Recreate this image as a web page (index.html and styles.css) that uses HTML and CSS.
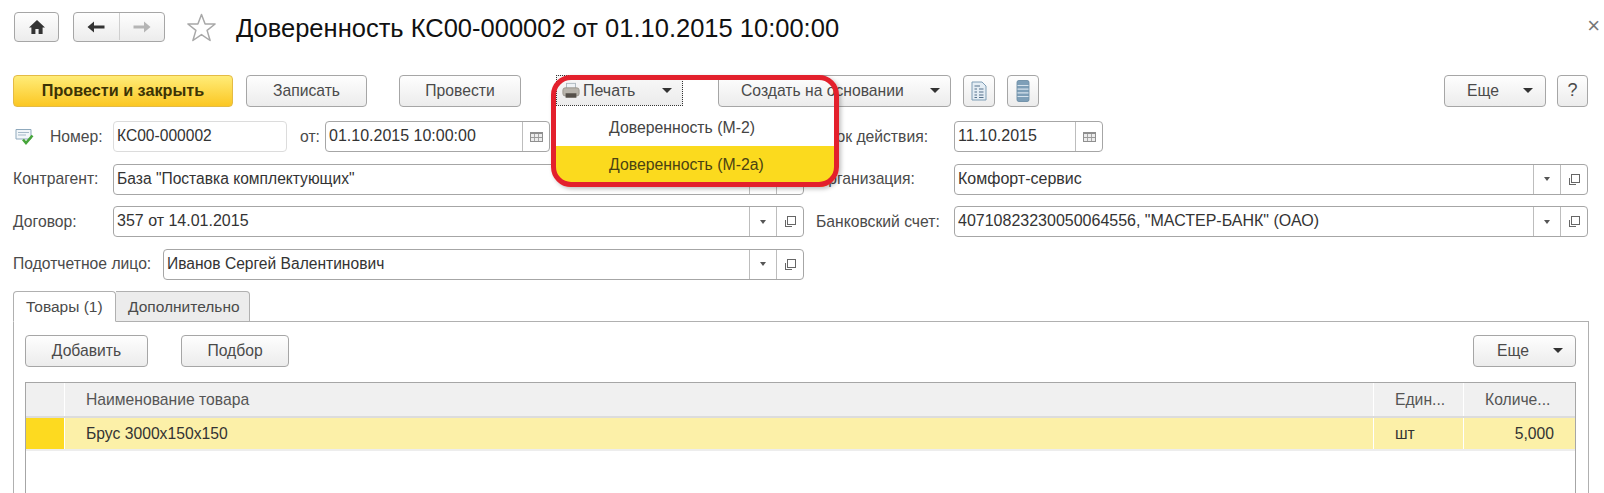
FILE: index.html
```html
<!DOCTYPE html>
<html lang="ru">
<head>
<meta charset="utf-8">
<title>Доверенность КС00-000002</title>
<link rel="stylesheet" href="styles.css">
</head>
<body>
<div class="page">
  <header class="head">
    <button class="btn nav-home"><svg width="18" height="16" viewBox="0 0 18 16"><path d="M9 1 L17 8.5 H14.6 V15 H10.6 V10 H7.4 V15 H3.4 V8.5 H1 Z" fill="#333"/></svg></button>
    <div class="btn nav-pair">
      <span class="nav-cell"><svg width="18" height="12" viewBox="0 0 18 12"><path d="M0.5 6 L7 0.5 V4.4 H17.5 V7.6 H7 V11.5 Z" fill="#333"/></svg></span>
      <span class="nav-cell"><svg width="18" height="12" viewBox="0 0 18 12"><path d="M17.5 6 L11 0.5 V4.4 H0.5 V7.6 H11 V11.5 Z" fill="#b5b5b5"/></svg></span>
    </div>
    <svg class="star" width="31" height="29" viewBox="0 0 30 29"><path d="M15 1.5 L18.6 11 H28.6 L20.6 17.4 L23.6 27.5 L15 21.6 L6.4 27.5 L9.4 17.4 L1.4 11 H11.4 Z" fill="none" stroke="#a8a8a8" stroke-width="1.5" stroke-linejoin="round"/></svg>
    <h1 class="title">Доверенность КС00-000002 от 01.10.2015 10:00:00</h1>
    <span class="close">×</span>
  </header>

  <div class="toolbar">
    <button class="btn btn-primary">Провести и закрыть</button>
    <button class="btn btn-save">Записать</button>
    <button class="btn btn-post">Провести</button>
    <button class="btn btn-print">
      <svg width="18" height="18" viewBox="0 0 20 19"><rect x="5" y="1" width="10" height="7" fill="#eef2f5" stroke="#a9b4bc"/><rect x="1" y="6" width="18" height="9" rx="2.5" fill="#b8b4ac" stroke="#98948c"/><rect x="4" y="12" width="12" height="5" fill="#55504a"/></svg>
      <span class="print-label">Печать</span><i class="caret"></i>
    </button>
    <button class="btn btn-create">Создать на основании<i class="caret"></i></button>
    <button class="btn btn-icon"><svg width="16" height="20" viewBox="0 0 16 20"><path d="M1 1 H11 L15 5 V19 H1 Z" fill="#e4edf4" stroke="#7f9db5"/><path d="M3.5 5 H9 M3.5 8 H6 M8 8 H12.5 M3.5 11 H6 M8 11 H12.5 M3.5 14 H6 M8 14 H12.5 M3.5 16.5 H6 M8 16.5 H12.5" stroke="#54708a" stroke-width="1.2"/></svg></button>
    <button class="btn btn-icon"><svg width="14" height="22" viewBox="0 0 14 24"><rect x="0.5" y="0.5" width="13" height="23" rx="2" fill="#7e9fb8" stroke="#6b8ca5"/><path d="M1 6 H13 M1 10 H13 M1 14 H13 M1 18 H13" stroke="#d5e2ec" stroke-width="1.2"/></svg></button>
    <button class="btn btn-more">Еще<i class="caret"></i></button>
    <button class="btn btn-help">?</button>
  </div>

  <form class="form">
    <div class="row">
      <svg class="status" width="19" height="17" viewBox="0 0 19 17"><path d="M1 1.5 H16 V11 H1 Z" fill="#f2f6f9" stroke="#8fa9bd"/><path d="M3 4.5 H14 M3 7 H11" stroke="#a5b9c8"/><path d="M8 11.5 L11 15 L17.5 7.5" fill="none" stroke="#46a53a" stroke-width="2.6"/></svg>
      <label class="lbl lbl-number">Номер:</label>
      <div class="field field-number"><span class="val val-name">КС00-000002</span></div>
      <label class="lbl lbl-date">от:</label>
      <div class="field field-date"><span class="val">01.10.2015 10:00:00</span><span class="cell"><i class="cal"></i></span></div>
      <label class="lbl lbl-term">Срок действия:</label>
      <div class="field field-term"><span class="val">11.10.2015</span><span class="cell"><i class="cal"></i></span></div>
    </div>
    <div class="row">
      <label class="lbl lbl-main">Контрагент:</label>
      <div class="field field-left"><span class="val val-name">База "Поставка комплектующих"</span><span class="cell"><i class="drop"></i></span><span class="cell"><i class="open"></i></span></div>
      <label class="lbl lbl-side">Организация:</label>
      <div class="field field-right"><span class="val">Комфорт-сервис</span><span class="cell"><i class="drop"></i></span><span class="cell"><i class="open"></i></span></div>
    </div>
    <div class="row">
      <label class="lbl lbl-main">Договор:</label>
      <div class="field field-left"><span class="val">357 от 14.01.2015</span><span class="cell"><i class="drop"></i></span><span class="cell"><i class="open"></i></span></div>
      <label class="lbl lbl-side">Банковский счет:</label>
      <div class="field field-right"><span class="val">40710823230050064556, "МАСТЕР-БАНК" (ОАО)</span><span class="cell"><i class="drop"></i></span><span class="cell"><i class="open"></i></span></div>
    </div>
    <div class="row">
      <label class="lbl lbl-person">Подотчетное лицо:</label>
      <div class="field field-person"><span class="val val-name">Иванов Сергей Валентинович</span><span class="cell"><i class="drop"></i></span><span class="cell"><i class="open"></i></span></div>
    </div>
  </form>

  <div class="tabs">
    <div class="tab tab-active">Товары (1)</div>
    <div class="tab tab-extra">Дополнительно</div>
  </div>
  <section class="panel">
    <div class="panel-bar">
      <button class="btn btn-add">Добавить</button>
      <button class="btn btn-pick">Подбор</button>
      <button class="btn btn-more2">Еще<i class="caret"></i></button>
    </div>
    <div class="table">
      <div class="tr thead">
        <div class="td"></div>
        <div class="td">Наименование товара</div>
        <div class="td">Един...</div>
        <div class="td">Количе...</div>
      </div>
      <div class="tr tbody">
        <div class="td td-marker"></div>
        <div class="td">Брус 3000х150х150</div>
        <div class="td">шт</div>
        <div class="td td-num">5,000</div>
      </div>
    </div>
  </section>

  <div class="menu">
    <div class="menu-item">Доверенность (М-2)</div>
    <div class="menu-item menu-item-on">Доверенность (М-2а)</div>
  </div>
  <div class="frame"></div>
</div>
</body>
</html>
```
FILE: styles.css
```css
* { box-sizing: border-box; }
html, body { margin: 0; padding: 0; background: #fff; }
.page {
  position: relative;
  width: 1604px;
  height: 493px;
  overflow: hidden;
  font-family: "Liberation Sans", Arial, sans-serif;
  font-size: 15.7px;
  color: #4a4a4a;
}
.btn {
  display: inline-flex;
  align-items: center;
  justify-content: center;
  flex: none;
  height: 32px;
  padding: 0 0 1px;
  border: 1px solid #a6a6a6;
  border-radius: 4px;
  background: linear-gradient(#fefefe, #ececec);
  font: inherit;
  color: #4a4a4a;
}
.caret {
  display: block;
  flex: none;
  width: 0;
  height: 0;
  margin-left: auto;
  border-left: 5px solid transparent;
  border-right: 5px solid transparent;
  border-top: 5px solid #333;
}

/* head */
.head {
  display: flex;
  align-items: center;
  height: 75px;
  padding: 12px 0 33px 14px;
}
.nav-home { width: 45px; height: 30px; }
.nav-pair { width: 92px; height: 30px; margin-left: 14px; }
.nav-cell { flex: 1; height: 100%; display: flex; align-items: center; justify-content: center; }
.nav-cell + .nav-cell { border-left: 1px solid #cfcfcf; }
.star { margin-left: 21px; flex: none; }
.title {
  margin: 2px 0 0 19px;
  font-size: 25.5px;
  font-weight: 400;
  color: #111;
  white-space: nowrap;
}
.close { margin: -2px 4px 0 auto; font-size: 22px; color: #777; }

/* toolbar */
.toolbar { display: flex; align-items: flex-start; height: 46px; padding-left: 13px; }
.btn-primary {
  width: 220px;
  background: linear-gradient(#ffec78, #fbc723);
  border-color: #e4bb45;
  font-size: 16.2px;
  font-weight: 700;
  color: #3c3305;
}
.btn-save { width: 121px; margin-left: 13px; }
.btn-post { width: 122px; margin-left: 32px; }
.btn-print {
  justify-content: flex-start;
  width: 127px;
  height: 31px;
  margin-left: 35px;
  padding: 0 10px 0 5px;
  border: 1px dotted #333;
  border-radius: 0;
  background: linear-gradient(#f8f8f8, #ececec);
}
.print-label { margin-left: 3px; font-size: 16px; }
.btn-create { justify-content: flex-start; width: 233px; margin-left: 35px; padding: 0 10px 1px 22px; }
.btn-icon { width: 32px; margin-left: 12px; }
.btn-more { justify-content: flex-start; width: 102px; margin-left: 405px; padding: 0 12px 1px 22px; }
.btn-help { width: 31px; margin-left: 11px; font-size: 18px; }

/* form */
.form { display: flex; flex-direction: column; gap: 11.5px; padding-left: 13px; }
.row { display: flex; align-items: center; height: 31px; white-space: nowrap; }
.field {
  display: flex;
  flex: none;
  height: 100%;
  border: 1px solid #a6a6a6;
  border-radius: 4px;
  background: #fff;
  color: #333;
  font-size: 16px;
}
.val { flex: 1; padding-left: 3px; line-height: 27px; overflow: hidden; }
.val-name { font-size: 15.6px; }
.cell {
  display: flex;
  align-items: center;
  justify-content: center;
  flex: none;
  width: 27px;
  border-left: 1px solid #bdbdbd;
}
.status { margin-left: 2px; flex: none; }
.lbl { flex: none; }
.lbl-number { width: 63px; margin-left: 16px; }
.field-number { width: 174px; border-color: #dcdcdc; }
.lbl-date { width: 38px; padding-left: 13px; }
.field-date { width: 225px; }
.lbl-term { width: 404px; padding-right: 26px; text-align: right; }
.field-term { width: 149px; }
.lbl-main { width: 100px; }
.lbl-side { width: 150px; padding-left: 12px; }
.lbl-person { width: 150px; }
.field-left { width: 691px; }
.field-right { width: 634px; }
.field-person { width: 641px; }
.cal {
  display: block;
  width: 13px;
  height: 10px;
  border: 1px solid #8f8f8f;
  border-top-width: 2px;
  background:
    linear-gradient(#9a9a9a, #9a9a9a) 0 50% / 100% 1px no-repeat,
    repeating-linear-gradient(90deg, #ececec 0 3px, #a5a5a5 3px 4px);
}
.drop {
  display: block;
  width: 0;
  height: 0;
  border-left: 3.5px solid transparent;
  border-right: 3.5px solid transparent;
  border-top: 4px solid #555;
}
.open { position: relative; display: block; width: 11px; height: 11px; }
.open::before {
  content: "";
  position: absolute;
  left: 0;
  bottom: 0;
  width: 6px;
  height: 6px;
  border-left: 1px solid #666;
  border-bottom: 1px solid #666;
}
.open::after {
  content: "";
  position: absolute;
  top: 0;
  right: 0;
  width: 7px;
  height: 7px;
  border: 1px solid #666;
  background: #fff;
}

/* tabs */
.tabs { display: flex; height: 31px; margin-top: 11.5px; padding-left: 13px; position: relative; z-index: 1; font-size: 15.5px; }
.tab {
  height: 31px;
  padding: 0 12px;
  line-height: 29px;
  background: #ececec;
  border: 1px solid #b0b0b0;
  border-left: 0;
  border-radius: 0 4px 0 0;
  white-space: nowrap;
}
.tab-active {
  width: 103px;
  background: #fff;
  border-left: 1px solid #b0b0b0;
  border-bottom-color: #fff;
  border-radius: 4px 4px 0 0;
}
.tab-extra { width: 134px; padding: 0 0 0 12px; }
.panel {
  width: 1576px;
  height: 200px;
  margin: -1px 0 0 13px;
  padding: 13px 12px 0 11px;
  border: 1px solid #b0b0b0;
}
.panel-bar { display: flex; }
.btn-add { width: 123px; }
.btn-pick { width: 108px; margin-left: 33px; }
.btn-more2 { justify-content: flex-start; width: 103px; margin-left: auto; padding: 0 12px 1px 23px; }
.table { margin-top: 15px; height: 140px; border: 1px solid #a6a6a6; }
.tr { display: grid; grid-template-columns: 39px 1fr 90px 111px; }
.td { padding-left: 21px; border-right: 1px solid #fff; white-space: nowrap; overflow: hidden; }
.td:last-child { border-right: 0; }
.thead { height: 35px; line-height: 33px; background: #f0f0f0; border-bottom: 2px solid #dcdcdc; }
.thead .td:not(:first-child) { color: #555; }
.tbody { height: 33px; line-height: 32px; background: #fcf0a8; border-bottom: 2px solid #ededed; color: #333; }
.td-marker { background: #fdda20; }
.td-num { padding: 0 21px 0 0; text-align: right; }

/* open dropdown */
.menu {
  position: absolute;
  left: 556px;
  top: 107px;
  width: 280px;
  height: 80px;
  overflow: hidden;
  background: #fff;
  border-radius: 0 0 16px 16px;
  font-size: 15.8px;
}
.menu-item { height: 39px; padding-left: 53px; line-height: 41px; color: #444; }
.menu-item-on { height: 41px; line-height: 38px; background: #fbda1e; color: #4a4212; }
.frame {
  position: absolute;
  left: 551px;
  top: 75px;
  width: 288px;
  height: 112px;
  border: 5px solid #e3202c;
  border-radius: 20px;
  box-shadow: 2px 2px 4px rgba(0, 0, 0, 0.25);
}
```
